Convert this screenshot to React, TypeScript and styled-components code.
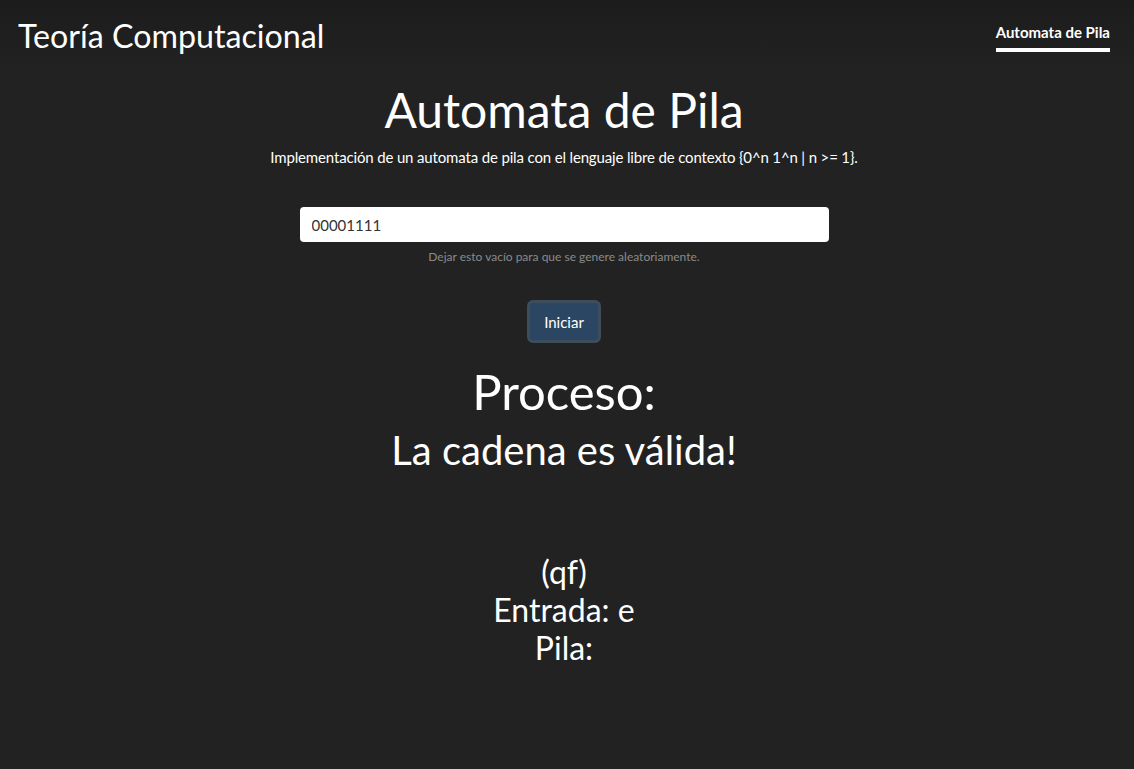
import React from "react";
import styled, { createGlobalStyle } from "styled-components";

const Global = createGlobalStyle`
  html, body { margin: 0; padding: 0; background: #222222; }
  body { font-family: Lato, "Open Sans", sans-serif; color: #ffffff; }
  * { box-sizing: border-box; }
`;

const Page = styled.div`
  min-height: 769px;
  background: #222222;
  display: flex;
  flex-direction: column;
`;

const Header = styled.header`
  display: flex;
  align-items: flex-start;
  justify-content: space-between;
  padding: 0 24px 0 18px;
  height: 72px;
  background: linear-gradient(#1c1c1c, #222222);
`;

const Brand = styled.div`
  font-size: 32.2px;
  line-height: 1;
  padding-top: 20px;
  color: #ffffff;
`;

const NavLink = styled.a`
  margin-top: 24px;
  font-size: 15px;
  font-weight: 700;
  line-height: 16px;
  color: #ffffff;
  padding-bottom: 8px;
  border-bottom: 4px solid #ffffff;
  text-decoration: none;
`;

const Main = styled.main`
  display: flex;
  flex-direction: column;
  align-items: center;
  text-align: center;
  padding-right: 6px;
`;

const Title = styled.h1`
  margin: 9px 0 0;
  font-size: 48px;
  font-weight: 400;
  line-height: 58px;
`;

const Lead = styled.p`
  margin: 8px 0 0;
  font-size: 15px;
  letter-spacing: -0.15px;
  line-height: 20px;
`;

const Field = styled.div`
  margin-top: 40px;
  display: flex;
  flex-direction: column;
  align-items: center;
  width: 529px;
`;

const Input = styled.input`
  width: 529px;
  height: 35px;
  border: none;
  border-radius: 4px;
  background: #ffffff;
  padding: 0 12px;
  font-family: Lato, sans-serif;
  font-size: 15px;
  color: #333333;
  outline: none;
`;

const Help = styled.small`
  margin-top: 7px;
  font-size: 12px;
  line-height: 15px;
  color: #8a8a8a;
`;

const Button = styled.button`
  margin-top: 36px;
  width: 74px;
  height: 43px;
  border: 3px solid #3e4d5c;
  border-radius: 6px;
  background: #2b4663;
  color: #ffffff;
  font-family: Lato, sans-serif;
  font-size: 15px;
`;

const Heading = styled.h2`
  margin: 19px 0 0;
  font-size: 49px;
  font-weight: 400;
  line-height: 58px;
`;

const Result = styled.h3`
  margin: 6px 0 0;
  font-size: 40px;
  font-weight: 400;
  line-height: 48px;
`;

const State = styled.div`
  margin-top: 79px;
  font-size: 32px;
  line-height: 38px;
`;

export default function App() {
  return (
    <Page>
      <Global />
      <Header>
        <Brand>Teoría Computacional</Brand>
        <NavLink>Automata de Pila</NavLink>
      </Header>
      <Main>
        <Title>Automata de Pila</Title>
        <Lead>
          Implementación de un automata de pila con el lenguaje libre de contexto {"{0^n 1^n | n >= 1}"}.
        </Lead>
        <Field>
          <Input defaultValue="00001111" />
          <Help>Dejar esto vacío para que se genere aleatoriamente.</Help>
        </Field>
        <Button>Iniciar</Button>
        <Heading>Proceso:</Heading>
        <Result>La cadena es válida!</Result>
        <State>
          (qf)
          <br />
          Entrada: e
          <br />
          Pila:
        </State>
      </Main>
    </Page>
  );
}
